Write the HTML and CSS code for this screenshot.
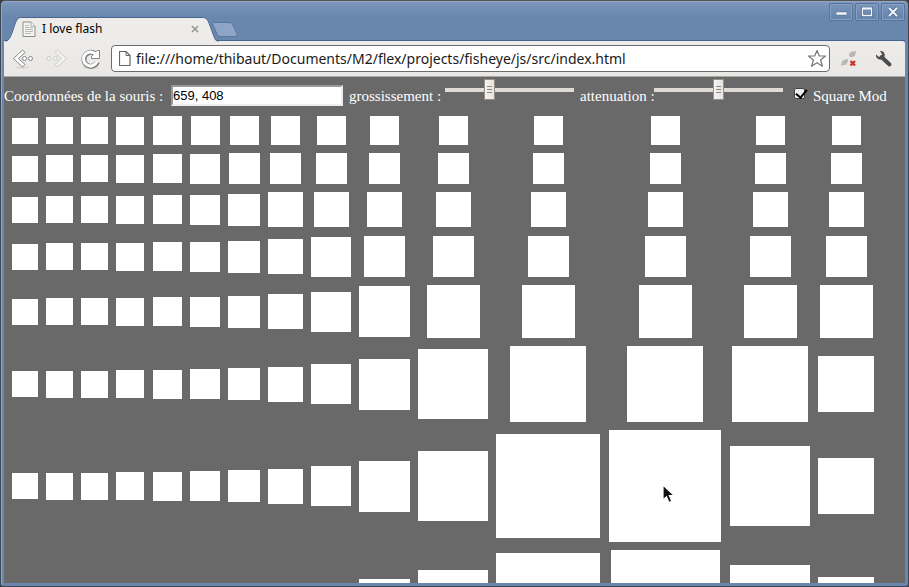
FILE: index.html
```html
<!DOCTYPE html>
<html lang="fr">
<head>
<meta charset="utf-8">
<title>I love flash</title>
<link rel="stylesheet" href="styles.css">
</head>
<body>
<div class="window">
  <header class="titlebar">
    <div class="tab">
      <svg class="tab-shape" width="215" height="26" viewBox="0 0 215 26" aria-hidden="true">
        <path d="M0 26C5 23 6 21 8 16L11 7C13 2 14 .5 18 .5H198C202 .5 203 2 205 6L209 17C211 22 211 24 215 24.500V26Z" fill="#edecea" stroke="#48658f"/>
        <path d="M0 24.500H215V26H0Z" fill="#edecea"/>
      </svg>
      <svg class="tab-icon" width="14" height="17" viewBox="0 0 14 17" aria-hidden="true">
        <path d="M1 1H9L13 5V15.500H1Z" fill="#f4f4f2" stroke="#8b8c88"/>
        <path d="M9 1V5H13" fill="#fff" stroke="#a5a6a2"/>
        <path d="M3 4.500H7M3 6.500H11M3 8.500H11M3 10.500H11M3 12.500H9" stroke="#b9bab7"/>
      </svg>
      <span class="tab-title">I love flash</span>
      <button class="tab-close" aria-label="Fermer l'onglet">
        <svg width="8" height="8" viewBox="0 0 8 8"><path d="M1 1L7 7M7 1L1 7" stroke="#949494" stroke-width="1.600"/></svg>
      </button>
    </div>
    <button class="new-tab" aria-label="Nouvel onglet">
      <svg width="26" height="17" viewBox="0 0 26 17"><path d="M2 1.500H17C19 1.500 20 2 21 4L25 13C25.500 15 25 15.500 23 15.500H9C7 15.500 6 15 5 13L1 4C.500 2 1 1.500 2 1.500Z" fill="#8ea5c7" stroke="#58759f"/></svg>
    </button>
    <div class="window-buttons">
      <button aria-label="Réduire"><svg width="14" height="12" viewBox="0 0 14 12"><rect x="2" y="6" width="11" height="3" rx="1" fill="#f1f4f8" stroke="#4c6894" stroke-width=".5"/></svg></button>
      <button aria-label="Agrandir"><svg width="14" height="12" viewBox="0 0 14 12"><path d="M2.500 2.500H11.500V9.500H2.500Z" fill="none" stroke="#4c6894" stroke-width="3"/><path d="M2.500 2.500H11.500V9.500H2.500Z" fill="none" stroke="#f1f4f8" stroke-width="1.400"/><path d="M2 2.500H12" stroke="#f1f4f8" stroke-width="2"/></svg></button>
      <button aria-label="Fermer"><svg width="14" height="12" viewBox="0 0 14 12"><path d="M3 2L11 10M11 2L3 10" stroke="#4c6894" stroke-width="3.500"/><path d="M3 2L11 10M11 2L3 10" stroke="#f1f4f8" stroke-width="2"/></svg></button>
    </div>
  </header>

  <nav class="toolbar">
    <button class="tool" aria-label="Précédent">
      <svg width="22" height="20" viewBox="0 0 22 20"><ellipse cx="10" cy="18.500" rx="7" ry="1" fill="#d6d5d3"/><g fill="#fff" stroke="#858583"><path d="M10.500 1L1.500 9.500L10.500 18L13 15.500L6.500 9.500L13 3.500Z" stroke-linejoin="round"/><circle cx="12.500" cy="9.500" r="2"/><circle cx="18.500" cy="9.500" r="2"/></g></svg>
    </button>
    <button class="tool" aria-label="Suivant">
      <svg width="22" height="20" viewBox="0 0 22 20"><g fill="#f3f2f1" stroke="#cbcbc9"><path d="M11.500 1L20.500 9.500L11.500 18L9 15.500L15.500 9.500L9 3.500Z" stroke-linejoin="round"/><circle cx="9.500" cy="9.500" r="2"/><circle cx="3" cy="9.500" r="2"/></g></svg>
    </button>
    <button class="tool" aria-label="Actualiser">
      <svg width="22" height="20" viewBox="0 0 22 20"><ellipse cx="11" cy="18.800" rx="8" ry="1" fill="#d6d5d3"/><path d="M17.500 13A7 7 0 1 1 15.500 5" fill="none" stroke="#858583" stroke-width="5"/><path d="M19.500 1.500V9.500H11.500V7.500L17 1.500Z" fill="#fff" stroke="#858583"/><path d="M17 12.500A7 7 0 1 1 15.500 5L17 6.500" fill="none" stroke="#fff" stroke-width="3"/></svg>
    </button>
    <div class="omnibox">
      <svg width="12" height="16" viewBox="0 0 12 16" aria-hidden="true"><path d="M.5.500H7L11 4.500V14.500H.5Z" fill="#fff" stroke="#666" stroke-width="1.200"/><path d="M7 .5V4.500H11" fill="none" stroke="#666"/></svg>
      <input class="url" aria-label="Adresse" value="file:///home/thibaut/Documents/M2/flex/projects/fisheye/js/src/index.html">
      <button class="star" aria-label="Favori">
        <svg width="20" height="19" viewBox="0 0 20 19"><path d="M10 1.500L12.300 7H18.500L13.500 11L15.500 17.300L10 13.700L4.500 17.300L6.500 11L1.500 7H7.700Z" fill="#fff" stroke="#777" stroke-width="1.200" stroke-linejoin="round"/></svg>
      </button>
    </div>
    <button class="tool" aria-label="Extension">
      <svg width="18" height="18" viewBox="0 0 18 18"><path d="M9 6C9 3 11 1 14 1.500L16 .5L15.500 3C16 6 13 7.500 10.500 7Z" fill="#b8b8b6"/><path d="M8 10C8 13 6 15.500 3 15L1 16L1.500 13.500C1.500 11 3.500 9.500 6 9.500L7 8.500Z" fill="#b8b8b6"/><path d="M10.500 11L15 15.500M15 11L10.500 15.500" stroke="#d2302b" stroke-width="2.400"/></svg>
    </button>
    <button class="tool" aria-label="Menu">
      <svg width="18" height="18" viewBox="0 0 18 18"><path d="M6.500 7L14.500 14.500" stroke="#4d4d4d" stroke-width="4" stroke-linecap="round"/><path d="M5 1C8 .5 10.500 3 9.500 6.500L6.500 9.500C3.500 10 .5 8 1 4.500L4 7L6.500 6.500L7 4Z" fill="#4d4d4d"/></svg>
    </button>
  </nav>

  <main class="page">
    <form class="controls">
      <label class="label-mouse" for="mouse">Coordonnées de la souris :</label>
      <input class="mouse" id="mouse" type="text" value="659, 408">
      <label class="label-zoom" for="zoom">grossissement :</label>
      <input class="slider" id="zoom" type="range" min="0" max="100" value="33">
      <label class="label-damp" for="damp">attenuation :</label>
      <input class="slider" id="damp" type="range" min="0" max="100" value="50">
      <input class="check" id="square" type="checkbox" checked>
      <label for="square">Square Mod</label>
    </form>
    <div class="fisheye" id="fisheye"></div>
  </main>

  <svg class="cursor" width="14" height="20" viewBox="0 0 14 20" aria-hidden="true"><path d="M1 1V16L4.500 12.800L7 18.500L9.800 17.200L7.400 11.700H12.500Z" fill="#111" stroke="#fff" stroke-width="1.200"/></svg>
</div>
<script src="fisheye.js"></script>
</body>
</html>
```
FILE: styles.css
```css
* { box-sizing: border-box; }

body {
  margin: 0;
  background: #3a3f47;
}

button {
  display: flex;
  align-items: center;
  justify-content: center;
  margin: 0;
  padding: 0;
  border: 0;
  background: none;
}

svg { display: block; flex: none; }

.window {
  position: relative;
  display: flex;
  flex-direction: column;
  height: 100vh;
  padding: 0 3px 3px;
  border: 1px solid #3f4650;
  border-top-color: #555;
  border-radius: 5px 5px 3px 3px;
  background: linear-gradient(#8098bc, #6987ae 15px);
  box-shadow: inset 1px 1px #91a6c6;
  overflow: hidden;
}

/* Title bar */

.titlebar {
  display: flex;
  align-items: flex-start;
  height: 40px;
  flex: none;
  border-bottom: 1px solid #48658f;
}

.tab {
  position: relative;
  display: flex;
  align-items: center;
  width: 207px;
  height: 24px;
  margin-top: 16px;
  padding: 0 12px 0 18px;
}

.tab-shape {
  position: absolute;
  left: 0;
  top: 0;
}

.tab-icon, .tab-title, .tab-close { position: relative; }

.tab-title {
  flex: 1;
  margin-left: 6px;
  font: 12px/16px "Noto Sans", sans-serif;
  color: #000;
}

.tab-close { width: 8px; height: 8px; }

.new-tab { margin: 20px 0 0 1px; }

.window-buttons {
  display: flex;
  gap: 2px;
  margin: 2px 0 0 auto;
}

.window-buttons button {
  width: 24px;
  height: 18px;
  border: 1px solid #56739d;
  border-radius: 2px;
  box-shadow: inset 0 0 0 1px #86a0c5;
}

/* Toolbar */

.toolbar {
  display: flex;
  align-items: center;
  flex: none;
  height: 36px;
  padding: 0 12px 0 8px;
  border-bottom: 1px solid #a9a9a6;
  border-top-right-radius: 3px;
  background: linear-gradient(#edecea, #e9e8e6);
}

.tool { margin-right: 12px; }
.tool:nth-child(3) { margin-right: 9px; }
.tool:last-child { margin: 0 0 0 5px; }

.omnibox {
  display: flex;
  align-items: center;
  flex: 1;
  height: 27px;
  margin-right: 10px;
  padding: 0 2px 0 7px;
  border: 1px solid #6c6c6a;
  border-radius: 4px;
  background: #fff;
}

.url {
  flex: 1;
  min-width: 0;
  margin-left: 5px;
  padding: 0;
  border: 0;
  outline: 0;
  background: none;
  font: 14px/20px "Noto Sans", sans-serif;
  color: #1a1a1a;
}

/* Page */

.page {
  flex: 1;
  min-height: 0;
  background: #696969;
  overflow: hidden;
}

.controls {
  display: flex;
  align-items: center;
  gap: 6px;
  height: 37px;
  font: 15px/20px "Liberation Serif", serif;
  color: #fff;
  white-space: nowrap;
}

.label-mouse { width: 161px; }
.label-zoom { width: 90px; }
.label-damp { width: 68px; }

.mouse {
  width: 172px;
  height: 21px;
  padding: 0;
  border: 2px solid;
  border-color: #9a9a9a #eee #eee #9a9a9a;
  background: #fff;
  font: 13px/16px "Liberation Sans", sans-serif;
  color: #000;
}

.slider {
  appearance: none;
  width: 129px;
  height: 21px;
  margin: 0 0 12px;
  background: linear-gradient(#dfdbd6, #dfdbd6) center / 100% 4px no-repeat;
}

.slider::-webkit-slider-thumb {
  appearance: none;
  width: 11px;
  height: 21px;
  border: 1px solid #988f86;
  background:
    linear-gradient(#8d8881 1px, transparent 1px 3px, #8d8881 3px 4px, transparent 4px 6px, #8d8881 6px) center / 5px 7px no-repeat,
    linear-gradient(90deg, #f6f4f2, #e6e2de);
}

.check {
  appearance: none;
  width: 11px;
  height: 11px;
  margin: 0 2px 4px 5px;
  border: 1px solid #444;
  border-radius: 2px;
  background: #eee;
}

.check:checked::before {
  content: "";
  display: block;
  width: 5px;
  height: 9px;
  margin: -2px 0 0 3px;
  border: solid #000;
  border-width: 0 2px 2px 0;
  transform: rotate(40deg);
}

.fisheye {
  display: grid;
  padding: 2px 8px;
}

.cell {
  display: grid;
  place-items: center;
  place-self: end;
}

.square { background: #fff; }

.cursor {
  position: absolute;
  left: 661px;
  top: 483px;
}
```
FILE: fisheye.js
```js
// Track sizes around the magnified point, and the free space before each track.
const columns = [26, 27, 27, 28, 29, 30, 32, 35, 40, 51, 70, 104, 112, 80, 56];
const columnGaps = [0, 8, 8, 8, 9, 8, 8, 8, 8, 8, 8, 8, 9, 9, 8];
const rows = [29, 31, 35, 41, 53, 76, 112, 109];
const rowGaps = [0, 8, 8, 9, 8, 8, 8, 8];

const tracks = (sizes, gaps) => sizes.map((size, i) => size + gaps[i] + "px").join(" ");
const view = document.getElementById("fisheye");
view.style.gridTemplateColumns = tracks(columns, columnGaps);
view.style.gridTemplateRows = tracks(rows, rowGaps);

for (const height of rows) {
  for (const width of columns) {
    const cell = document.createElement("div");
    const square = document.createElement("div");
    const side = Math.min(width, height);
    cell.className = "cell";
    cell.style.width = width + "px";
    cell.style.height = height + "px";
    square.className = "square";
    square.style.width = side + "px";
    square.style.height = side + "px";
    cell.append(square);
    view.append(cell);
  }
}
```
